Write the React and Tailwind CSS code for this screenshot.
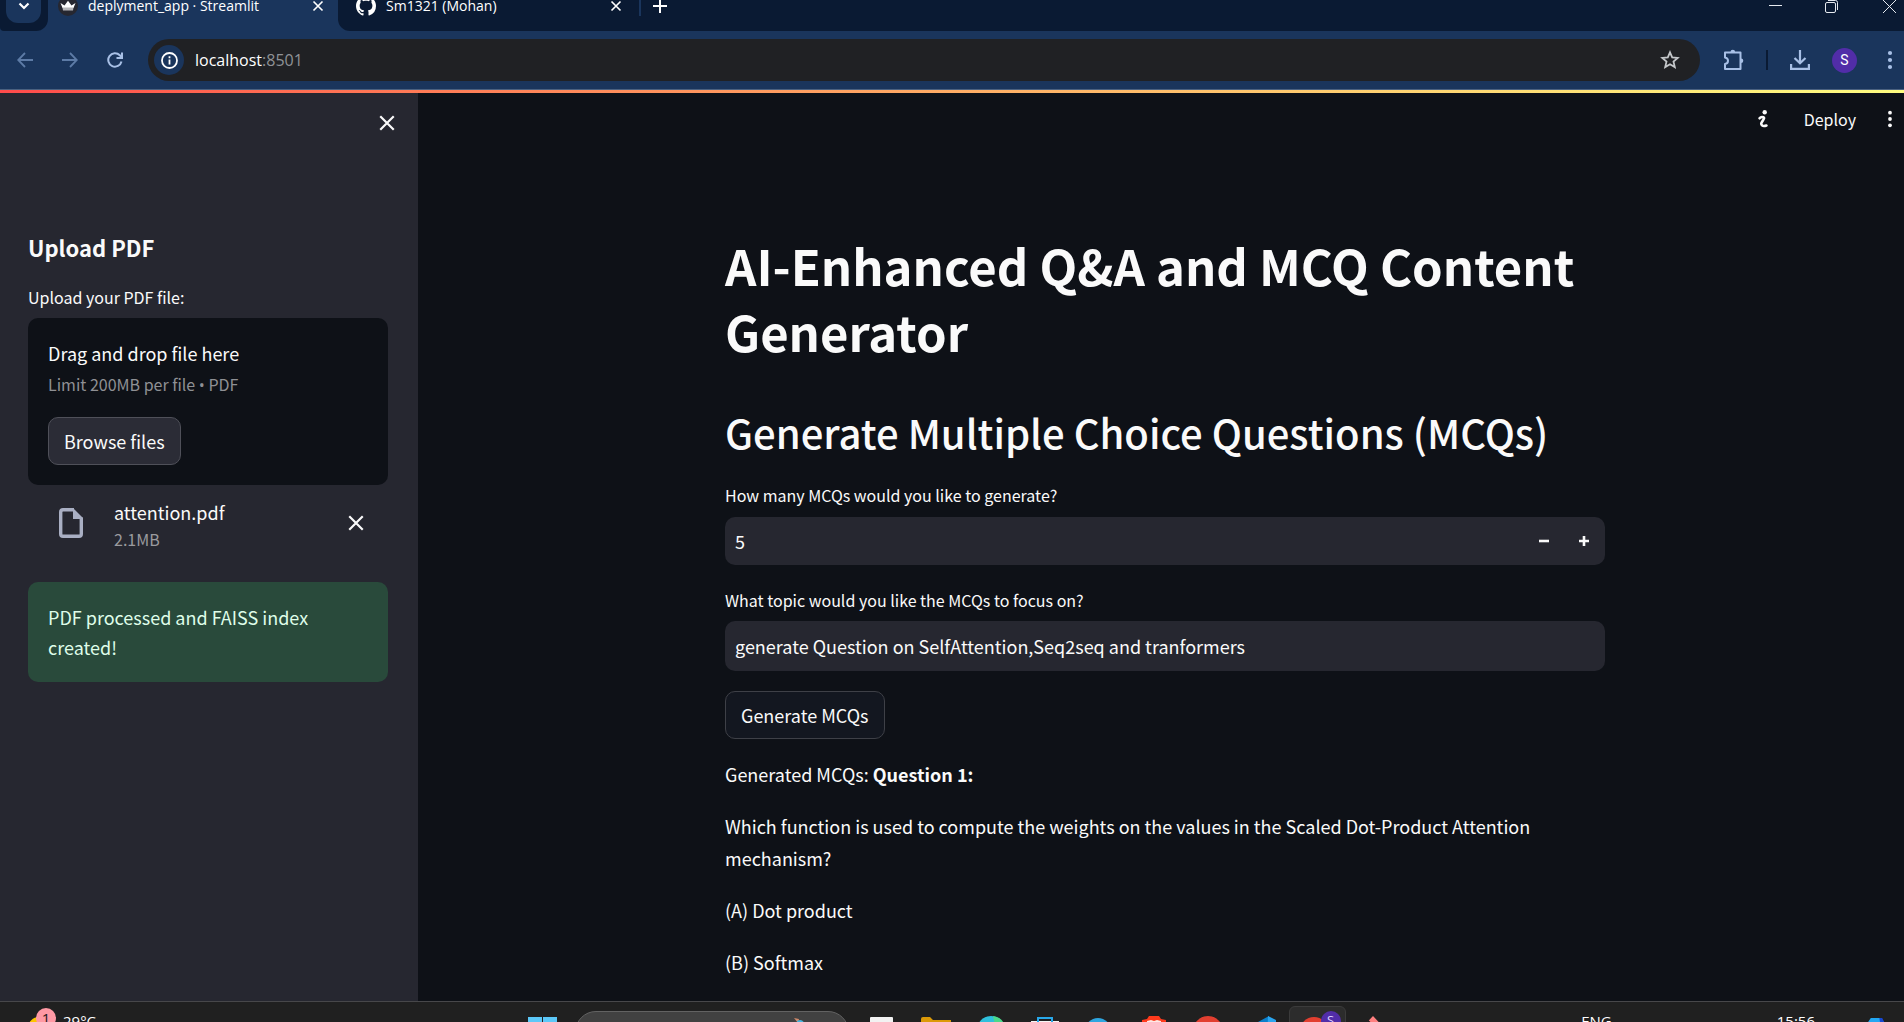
import { useState } from "react";

function Cross({ className, width = 2 }) {
  return (
    <svg viewBox="0 0 16 16" className={className} fill="none" stroke="currentColor" strokeWidth={width}>
      <path d="M2 2 14 14M14 2 2 14" />
    </svg>
  );
}

function Dots({ className }) {
  return (
    <svg viewBox="0 0 6 20" className={className} fill="currentColor">
      <circle cx="3" cy="3" r="2.1" />
      <circle cx="3" cy="10" r="2.1" />
      <circle cx="3" cy="17" r="2.1" />
    </svg>
  );
}

function TabStrip() {
  return (
    <div className="flex h-[31px] shrink-0 items-end overflow-hidden bg-[#1a355c] text-white">
      <div className="flex h-[50px] w-12 shrink-0 items-start justify-end rounded-br-xl rounded-bl-sm bg-[#0a1a33] pr-[7px]">
        <button aria-label="Search tabs" className="flex h-[42px] w-[35px] items-center justify-center rounded-xl bg-[#1a355c] pt-2">
          <svg viewBox="0 0 12 8" className="h-2 w-3" fill="none" stroke="currentColor" strokeWidth="2.2">
            <path d="M1.5 1.5 6 6l4.5-4.5" />
          </svg>
        </button>
      </div>
      <div className="flex h-[50px] w-[290px] shrink-0 items-center pr-3.5 pl-2.5">
        <span className="flex size-5 items-center justify-center rounded-full bg-[#262730]">
          <svg viewBox="0 0 16 12" className="h-3 w-4">
            <path d="M.5 3 4.500 5.500 8 .8l3.500 4.700L15.500 3 13.500 8H2.500Z" fill="#fff" />
            <path d="M2.500 7.500H13.500L13 10.500H3Z" fill="#b5b5b8" />
          </svg>
        </span>
        <a href="#app" className="ml-2.5 flex-1 text-sm leading-5">deplyment_app · Streamlit</a>
        <button aria-label="Close deplyment_app tab"><Cross className="size-3" width={2.2} /></button>
      </div>
      <div className="flex h-[50px] flex-1 items-center rounded-bl-xl bg-[#0a1a33] pl-[18px]">
        <svg viewBox="0 0 16 16" className="size-5" fill="#fff">
          <path d="M8 0C3.580 0 0 3.580 0 8c0 3.540 2.290 6.530 5.470 7.590.4.070.55-.17.55-.38 0-.19-.01-.82-.01-1.490-2.010.37-2.530-.49-2.690-.94-.09-.23-.48-.94-.82-1.130-.28-.15-.68-.52-.01-.53.63-.01 1.080.58 1.230.82.72 1.210 1.870.87 2.330.66.070-.52.28-.87.51-1.070-1.780-.2-3.640-.89-3.640-3.950 0-.87.31-1.590.82-2.150-.08-.2-.36-1.020.08-2.120 0 0 .67-.21 2.200.82.64-.18 1.320-.27 2-.27s1.360.09 2 .27c1.530-1.040 2.200-.82 2.200-.82.44 1.100.16 1.920.08 2.120.51.56.82 1.270.82 2.150 0 3.070-1.870 3.750-3.650 3.950.29.25.54.73.54 1.480 0 1.070-.01 1.930-.01 2.200 0 .21.15.46.55.38A8.010 8.010 0 0 0 16 8c0-4.420-3.580-8-8-8Z" />
        </svg>
        <a href="#profile" className="ml-2.5 w-56 text-sm leading-5">Sm1321 (Mohan)</a>
        <button aria-label="Close Sm1321 tab"><Cross className="size-3" width={2.2} /></button>
        <span className="ml-[17px] h-5 w-0.5 bg-[#1a355c]" />
        <button aria-label="New tab" className="ml-3">
          <svg viewBox="0 0 14 14" className="size-3.5" stroke="currentColor" strokeWidth="2">
            <path d="M7 0V14M0 7H14" />
          </svg>
        </button>
        <div className="ml-auto flex items-center pr-2 text-[#e6eaf0]">
          <button aria-label="Minimize" className="flex w-14 justify-center">
            <svg viewBox="0 0 13 13" className="size-[13px]" stroke="currentColor"><path d="M0 5.500H13" /></svg>
          </button>
          <button aria-label="Restore" className="flex w-14 justify-center">
            <svg viewBox="0 0 13 13" className="size-[13px]" fill="none" stroke="currentColor">
              <rect x=".5" y="2.500" width="10" height="10" rx="1.500" />
              <path d="M3 .5H10.500Q12.500.5 12.500 2.500V10" />
            </svg>
          </button>
          <button aria-label="Close window" className="ml-6 flex justify-center">
            <svg viewBox="0 0 13 13" className="size-[13px]" stroke="currentColor"><path d="M0 0 13 13M13 0 0 13" /></svg>
          </button>
        </div>
      </div>
    </div>
  );
}

function Toolbar() {
  return (
    <div className="flex h-[59px] shrink-0 items-center border-b border-[#4a6180] bg-[#1a355c] text-[#a8c0e6]">
      <div className="flex w-[148px] shrink-0 items-center gap-[29px] pl-[17px]">
        <button aria-label="Back" className="text-[#5d7ba6]">
          <svg viewBox="0 0 16 16" className="size-4" fill="none" stroke="currentColor" strokeWidth="1.8"><path d="M16 8H1.500M8 1 1.200 8 8 15" /></svg>
        </button>
        <button aria-label="Forward" className="text-[#5d7ba6]">
          <svg viewBox="0 0 16 16" className="size-4" fill="none" stroke="currentColor" strokeWidth="1.8"><path d="M0 8H14.500M8 1 14.800 8 8 15" /></svg>
        </button>
        <button aria-label="Reload">
          <svg viewBox="0 0 16 16" className="size-4" fill="none" stroke="currentColor" strokeWidth="2">
            <path d="M14.500 9.500A6.700 6.700 0 1 1 12.800 3.300L14.500 5" />
            <path d="M15 .5V6H9.500" />
          </svg>
        </button>
      </div>
      <div className="flex h-[42px] flex-1 items-center rounded-full bg-[#202124] pr-5 pl-1.5">
        <button aria-label="Site information" className="flex size-[30px] items-center justify-center rounded-full bg-[#1a355c] text-white">
          <svg viewBox="0 0 17 17" className="size-[17px]" fill="none" stroke="currentColor" strokeWidth="1.800">
            <circle cx="8.500" cy="8.500" r="7.500" />
            <path d="M8.500 7.500V12.500M8.500 4.300V6.200" />
          </svg>
        </button>
        <span className="ml-[11px] flex-1 text-base leading-6 text-[#8f9296]"><span className="text-white">localhost</span>:8501</span>
        <button aria-label="Bookmark this page" className="text-[#c4c7ca]">
          <svg viewBox="0 0 20 20" className="size-5" fill="none" stroke="currentColor" strokeWidth="1.800">
            <path d="m10 2.300 2.200 5.100 5.500.5-4.200 3.700 1.300 5.500-4.800-2.900-4.800 2.900 1.300-5.500-4.200-3.700 5.500-.5Z" />
          </svg>
        </button>
      </div>
      <div className="flex shrink-0 items-center pr-[11px] pl-[23px]">
        <button aria-label="Extensions">
          <svg viewBox="0 0 22 22" className="size-[22px]" fill="none" stroke="currentColor" strokeWidth="2" strokeLinejoin="round">
            <path d="M2 3.500H17.500V20H2V15Q5 14.600 5 11.800T2 8.500Z" />
            <path d="M7.500 3a2.300 2.300 0 0 1 4.600 0ZM18 9.500a2.300 2.300 0 0 1 0 4.600Z" fill="currentColor" stroke="none" />
          </svg>
        </button>
        <span className="ml-[21px] h-5 w-0.5 bg-[#0a1a33]" />
        <button aria-label="Downloads" className="ml-[22px]">
          <svg viewBox="0 0 20 20" className="size-5" fill="none" stroke="currentColor" strokeWidth="2.200">
            <path d="M10 0V13M4.500 8 10 13.300 15.500 8M1.100 14V18.900H18.900V14" />
          </svg>
        </button>
        <button aria-label="Profile" className="mr-[30px] ml-[22px] flex size-[25px] items-center justify-center rounded-full bg-[#512da8] font-['Roboto',sans-serif] text-sm leading-5 text-white">S</button>
        <button aria-label="Browser menu"><Dots className="h-5 w-1.5" /></button>
      </div>
    </div>
  );
}

function Sidebar() {
  return (
    <aside className="w-[418px] shrink-0 bg-[#262730] pr-[30px] pl-7">
      <div className="flex justify-end pt-[21px]">
        <button aria-label="Close sidebar" className="-mr-2"><Cross className="size-[18px]" width={1.900} /></button>
      </div>
      <h2 className="mt-[99px] text-[22px] leading-8 font-bold">Upload PDF</h2>
      <p id="upload-label" className="mt-[22px] text-base leading-6">Upload your PDF file:</p>
      <section aria-labelledby="upload-label" className="mt-[9px] rounded-[10px] bg-[#0e1117] px-5 pt-[19px] pb-5">
        <p className="text-[18px] leading-8">Drag and drop file here</p>
        <p className="text-base leading-[30px] text-[#8f9094]">
          Limit 200MB per file <span className="font-['Open_Sans',sans-serif]">•</span> PDF
        </p>
        <button className="mt-[17px] h-12 rounded-[10px] border border-[#4f5059] bg-[#2b2c36] px-[15px] text-[18px] leading-8">Browse files</button>
      </section>
      <div className="flex items-center pt-[11px] pr-[23px] pl-[31px]">
        <svg viewBox="0 0 24 30" className="h-[30px] w-6" fill="none" stroke="#a9afc3" strokeWidth="3.400">
          <path d="M15 1.700H4Q1.700 1.700 1.700 4V26Q1.700 28.300 4 28.300H20Q22.300 28.300 22.300 26V9.500" />
          <path d="M14 0 24 10V11H14Z" fill="#a9afc3" stroke="none" />
        </svg>
        <div className="ml-[31px] flex-1">
          <p className="text-[18px] leading-8">attention.pdf</p>
          <p className="text-base leading-[22px] text-[#9a9a9e]">2.1MB</p>
        </div>
        <button aria-label="Remove attention.pdf"><Cross className="size-[18px]" width={1.900} /></button>
      </div>
      <p role="status" className="mt-8 rounded-[10px] bg-[#294a3b] p-5 text-[18px] leading-[30px] text-[#dffde9]">
        PDF processed and FAISS index created!
      </p>
    </aside>
  );
}

function Content() {
  const [count, setCount] = useState(5);
  const [topic, setTopic] = useState("generate Question on SelfAttention,Seq2seq and tranformers");
  return (
    <main className="flex min-w-0 flex-1 flex-col">
      <header className="flex items-center justify-end pt-[11px] pr-[11px]">
        <button aria-label="Running" className="mr-9">
          <svg viewBox="0 0 10 18" className="h-[18px] w-2.5" fill="none" stroke="currentColor" strokeWidth="2.600" strokeLinecap="round">
            <circle cx="6.700" cy="2.200" r="2.200" fill="currentColor" stroke="none" />
            <path d="M1.600 8.300Q3 6.400 5.600 7.300C7 8 4.600 10.500 3.600 12.500S4.200 17.200 8.400 15.500" />
          </svg>
        </button>
        <button className="text-base leading-[30px]">Deploy</button>
        <button aria-label="App menu" className="ml-[31px]"><Dots className="h-[18px] w-1.5" /></button>
      </header>
      <div className="mx-auto mt-[98px] w-full max-w-[888px] pl-2">
        <h1 className="text-[49px] leading-[66px] font-bold">AI-Enhanced Q&amp;A and MCQ Content Generator</h1>
        <h2 className="mt-[41px] text-[40px] leading-[54px] font-medium">Generate Multiple Choice Questions (MCQs)</h2>
        <label htmlFor="count" className="mt-6 block text-base leading-6">How many MCQs would you like to generate?</label>
        <div className="mt-2.5 flex h-12 items-center rounded-[10px] bg-[#262730] pr-[15px] pl-2.5">
          <input id="count" type="number" value={count} onChange={(e) => setCount(Number(e.target.value))} className="min-w-0 flex-1 [appearance:textfield] bg-transparent text-[18px] leading-8 outline-none [&::-webkit-inner-spin-button]:appearance-none" />
          <button aria-label="Decrease" onClick={() => setCount(count - 1)}>
            <svg viewBox="0 0 12 12" className="size-3" stroke="currentColor" strokeWidth="2.600"><path d="M1 6H11" /></svg>
          </button>
          <button aria-label="Increase" onClick={() => setCount(count + 1)} className="ml-7">
            <svg viewBox="0 0 12 12" className="size-3" stroke="currentColor" strokeWidth="2.600"><path d="M1 6H11M6 1V11" /></svg>
          </button>
        </div>
        <label htmlFor="topic" className="mt-[23px] block text-base leading-6">What topic would you like the MCQs to focus on?</label>
        <input id="topic" type="text" value={topic} onChange={(e) => setTopic(e.target.value)} className="mt-[9px] block h-[50px] w-full rounded-[10px] bg-[#262730] px-2.5 text-[18px] leading-8 outline-none" />
        <button className="mt-5 block h-12 rounded-[10px] border border-[#3e4047] bg-[#131720] px-[15px] text-[18px] leading-8">Generate MCQs</button>
        <div className="mt-[19px] flex flex-col gap-5 text-[18px] leading-8">
          <p>Generated MCQs: <strong>Question 1:</strong></p>
          <p>Which function is used to compute the weights on the values in the Scaled Dot-Product Attention mechanism?</p>
          <p>(A) Dot product</p>
          <p>(B) Softmax</p>
        </div>
      </div>
    </main>
  );
}

const apps = [
  ["Task view", <rect x="3" y="1" width="23" height="20" rx="1" fill="#f2f2f2" />],
  ["File Explorer", <path d="M0 3Q0 1 2 1H9L12 4H30V28H0Z" fill="#dc9a08" />],
  ["Edge", <><circle cx="15" cy="14" r="14" fill="#2fc0dc" /><path d="M17 0Q29 2 29 14H20Z" fill="#4bd98a" /></>],
  ["Store", <><path d="M1 5H29V28H1Z" fill="#f5f5f5" /><path d="M8 6V2H22V6" fill="none" stroke="#28a8ea" strokeWidth="2" /></>],
  ["Telegram", <circle cx="14" cy="15" r="13" fill="#2ea6e0" />],
  ["Brave", <><path d="M3 4 8 3 10 0H20L22 3 27 4V28H3Z" fill="#ff3a1c" /><path d="M8 5 12 4 15 5 18 4 22 5V10H8Z" fill="#ffe9e4" /></>],
  ["Chrome", <circle cx="15" cy="15" r="15" fill="#e23f30" />],
  ["Code", <><path d="M11 6 22 0V28H11Z" fill="#0a7fcb" /><path d="M21 0 29 4V28H20Z" fill="#2aa5ef" /></>],
];

function Taskbar() {
  return (
    <footer className="grid h-[21px] shrink-0 grid-cols-[1fr_896px_1fr] items-start overflow-hidden border-t border-[#47474a] bg-[#202020] text-white">
      <div className="flex items-start pt-1.5 pl-7">
        <span className="relative h-10 w-7">
          <svg viewBox="0 0 28 30" className="h-[30px] w-7"><circle cx="11" cy="20" r="11" fill="#fdc500" /></svg>
          <span className="absolute top-0 left-2 size-5 rounded-full bg-[#ff99a4] text-center text-[15px] leading-5 text-[#25171a]">1</span>
        </span>
        <span className="mt-[3px] ml-[7px] text-[15px] leading-5">29°C</span>
      </div>
      <div className="flex items-start pl-6">
        <button aria-label="Start" className="mt-[15px] w-[47px]">
          <svg viewBox="0 0 30 30" className="size-[30px]" fill="#5cc8f8"><path d="M0 0H14V14H0ZM15 0H29V14H15ZM0 15H14V29H0ZM15 15H29V29H15Z" /></svg>
        </button>
        <button aria-label="Search" className="mt-[9px] flex h-[42px] w-[274px] shrink-0 justify-end rounded-full border border-[#626262] bg-[#414141] pt-1.5 pr-7">
          <svg viewBox="0 0 26 20" className="h-5 w-[26px]"><path d="M0 0 5 1 4 5Z" fill="#d28b6c" /><path d="M3 3Q9 0 11 7H4Z" fill="#48b5e0" /></svg>
        </button>
        <div className="ml-1.5 flex flex-1">
          {apps.map(([name, art]) => (
            <button key={name} aria-label={name} className="flex flex-1 justify-center pt-3.5">
              <svg viewBox="0 0 30 30" className="size-[30px]">{art}</svg>
            </button>
          ))}
          <button aria-label="Chrome, profile S" className="relative mt-1 h-[50px] flex-1 rounded-md border border-[#3b3b3b] bg-[#2c2c2c]">
            <svg viewBox="0 0 50 50" className="absolute top-0 left-0 size-[50px]"><circle cx="24" cy="24" r="14" fill="#e23f30" /></svg>
            <span className="absolute top-1 right-1 size-5 rounded-full bg-[#512da8] text-center text-[13px] leading-[18px] text-[#dccfff]">S</span>
          </button>
          <button aria-label="Git" className="flex flex-1 justify-center pt-3.5">
            <svg viewBox="0 0 30 30" className="size-[30px]"><path d="M15 0 30 16 15 30 0 16Z" fill="#ff8080" /><path d="M9 4 17 12" stroke="#202020" strokeWidth="2" /></svg>
          </button>
        </div>
      </div>
      <div className="flex items-start justify-end pt-[9px] pr-[18px]">
        <span className="text-[15px] leading-5">ENG</span>
        <span className="ml-[165px] text-[15px] leading-5">15:56</span>
        <svg viewBox="0 0 20 20" className="mt-[7px] ml-[52px] size-[19px]"><path d="M4 0H15L20 8V20H0V6Z" fill="#22a7f2" /><path d="M13 0H16L19 6 15 12Z" fill="#1747d1" /></svg>
      </div>
    </footer>
  );
}

export default function App() {
  return (
    <div className="flex h-screen flex-col overflow-hidden bg-[#0e1117] font-['Open_Sans','Noto_Sans',sans-serif]">
      <TabStrip />
      <Toolbar />
      <div className="h-[3px] shrink-0 bg-linear-to-r from-[#ff4b4b] to-[#fffd80]" />
      <div className="flex min-h-0 flex-1 overflow-hidden font-['Noto_Sans_CJK_SC',sans-serif] text-[#fafafa]">
        <Sidebar />
        <Content />
      </div>
      <Taskbar />
    </div>
  );
}
